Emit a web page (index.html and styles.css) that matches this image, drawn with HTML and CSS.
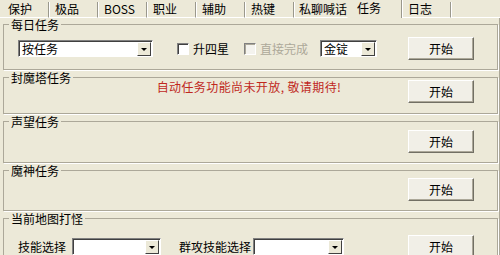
FILE: index.html
```html
<!DOCTYPE html>
<html lang="zh-CN">
  <head>
    <meta charset="UTF-8">
    <title>任务</title>
    <link rel="stylesheet" href="styles.css">
  </head>
  <body>
    <div class="tabs">
      <div class="tab">保护</div>
      <div class="tab">极品</div>
      <div class="tab">BOSS</div>
      <div class="tab">职业</div>
      <div class="tab">辅助</div>
      <div class="tab">热键</div>
      <div class="tab tab-before-active">私聊喊话</div>
      <div class="tab tab-active">任务</div>
      <div class="tab">日志</div>
      <div class="tab-fill"></div>
    </div>

    <div class="panel">
      <fieldset class="group">
        <legend>每日任务</legend>
        <div class="row row-daily">
          <div class="combo combo-task"><span class="combo-value">按任务</span><span class="combo-arrow"></span></div>
          <label class="check-label check-first"><span class="check"></span>升四星</label>
          <label class="check-label check-disabled"><span class="check"></span>直接完成</label>
          <div class="combo combo-gold"><span class="combo-value">金锭</span><span class="combo-arrow"></span></div>
          <button class="btn" type="button">开始</button>
        </div>
      </fieldset>

      <fieldset class="group">
        <legend>封魔塔任务</legend>
        <div class="row row-tower">
          <div class="notice">自动任务功能尚未开放, 敬请期待!</div>
          <button class="btn" type="button">开始</button>
        </div>
      </fieldset>

      <fieldset class="group">
        <legend>声望任务</legend>
        <div class="row row-fame">
          <button class="btn" type="button">开始</button>
        </div>
      </fieldset>

      <fieldset class="group">
        <legend>魔神任务</legend>
        <div class="row row-demon">
          <button class="btn" type="button">开始</button>
        </div>
      </fieldset>

      <fieldset class="group group-last">
        <legend>当前地图打怪</legend>
        <div class="row row-map">
          <span class="field-label">技能选择</span>
          <div class="combo combo-skill"><span class="combo-value"></span><span class="combo-arrow"></span></div>
          <span class="field-label field-aoe">群攻技能选择</span>
          <div class="combo combo-aoe"><span class="combo-value"></span><span class="combo-arrow"></span></div>
          <button class="btn" type="button">开始</button>
        </div>
      </fieldset>
    </div>
  </body>
</html>
```

FILE: styles.css
```css
:root {
  --face: #ECE9D8;
  --shadow: #ACA899;
  --dark: #716F64;
  --edge: #808080;
  --disabled: #ACA899;
  --red: #C0281E;
}

html {
  overflow: hidden;
}

body {
  margin: 0;
  width: 500px;
  height: 255px;
  overflow: hidden;
  background: var(--face);
  color: #000;
  font-family: "Noto Sans CJK SC", sans-serif;
  font-size: 12px;
  line-height: 14px;
}

/* tab strip */
.tabs {
  display: flex;
  height: 18px;
}

.tab {
  box-sizing: border-box;
  min-width: 49px;
  height: 16px;
  margin-top: 2px;
  padding: 0 0 0 6px;
  line-height: 14px;
  border-right: 1px solid #9A988C;
  border-bottom: 1px solid #fff;
  box-shadow: 1px 0 0 #fff;
}

.tab:first-child {
  padding-left: 8px;
}

.tab-before-active {
  min-width: 54px;
  padding-left: 5px;
  border-right-color: transparent;
  box-shadow: none;
}

.tab-active {
  min-width: 54px;
  height: 18px;
  margin-top: 0;
  padding: 1px 0 0 9px;
  line-height: 14px;
  border-bottom: none;
}

.tab-fill {
  flex: 1;
  border-bottom: 1px solid #fff;
}

/* main panel */
.panel {
  display: flex;
  flex-direction: column;
  gap: 1px;
  height: 237px;
  border-right: 1px solid var(--shadow);
}

.group {
  margin: 0 1px 0 3px;
  padding: 0;
  min-width: 0;
  border: 1px solid var(--shadow);
  box-shadow: 1px 1px 0 #fff;
}

.group-last {
  flex: 1;
  border-bottom: none;
}

.group legend {
  margin-left: 5px;
  padding: 0 2px;
  line-height: 13px;
}

.row {
  display: flex;
  align-items: center;
  height: 23px;
  padding-left: 14px;
}

.row-daily { margin-top: 6px; margin-bottom: 9px; }
.row-tower { margin-top: -4px; margin-bottom: 10px; }
.row-fame  { margin-top: 2px; margin-bottom: 9px; }
.row-demon { margin-top: 1px; margin-bottom: 9px; }
.row-map   { margin-top: 10px; }

/* buttons */
.btn {
  box-sizing: border-box;
  width: 66px;
  height: 23px;
  margin-left: auto;
  margin-right: 23px;
  padding: 0;
  font: inherit;
  color: #000;
  background: #F1EFE7;
  border: 1px solid;
  border-color: #fff var(--dark) var(--dark) #fff;
  box-shadow: inset -1px -1px 0 var(--shadow);
}

/* combo boxes */
.combo {
  box-sizing: border-box;
  display: flex;
  height: 17px;
  background: #fff;
  border: 1px solid;
  border-color: var(--edge) #fff #fff var(--edge);
  box-shadow: inset 1px 1px 0 #404040;
}

.combo-value {
  flex: 1;
  padding: 1px 0 0 3px;
  line-height: 14px;
}

.combo-arrow {
  position: relative;
  box-sizing: border-box;
  width: 14px;
  margin: 1px 1px 0 0;
  background: var(--face);
  border: 1px solid;
  border-color: #fff #404040 #404040 #fff;
}

.combo-arrow::after {
  content: "";
  position: absolute;
  left: 3px;
  top: 5px;
  border-top: 3px solid #000;
  border-left: 3px solid transparent;
  border-right: 3px solid transparent;
}

.combo-task  { width: 135px; }
.combo-gold  { width: 57px; margin-left: 12px; }
.combo-skill { width: 89px; margin-left: 6px; }
.combo-aoe   { width: 91px; margin-left: 2px; }

/* check boxes */
.check-label {
  display: flex;
  align-items: center;
  gap: 4px;
}

.check-first { margin-left: 24px; }

.check-disabled {
  margin-left: 15px;
  color: var(--disabled);
}

.check {
  box-sizing: border-box;
  width: 12px;
  height: 12px;
  background: #fff;
  border: 1px solid;
  border-color: var(--edge) #fff #fff var(--edge);
  box-shadow: inset 1px 1px 0 #404040;
}

.check-disabled .check {
  background: #F4F3EE;
  box-shadow: inset 1px 1px 0 var(--shadow);
}

.notice {
  flex: 1;
  align-self: flex-start;
  padding-left: 72px;
  text-align: center;
  letter-spacing: 0.4px;
  color: var(--red);
}

.field-aoe { margin-left: 18px; }
```
